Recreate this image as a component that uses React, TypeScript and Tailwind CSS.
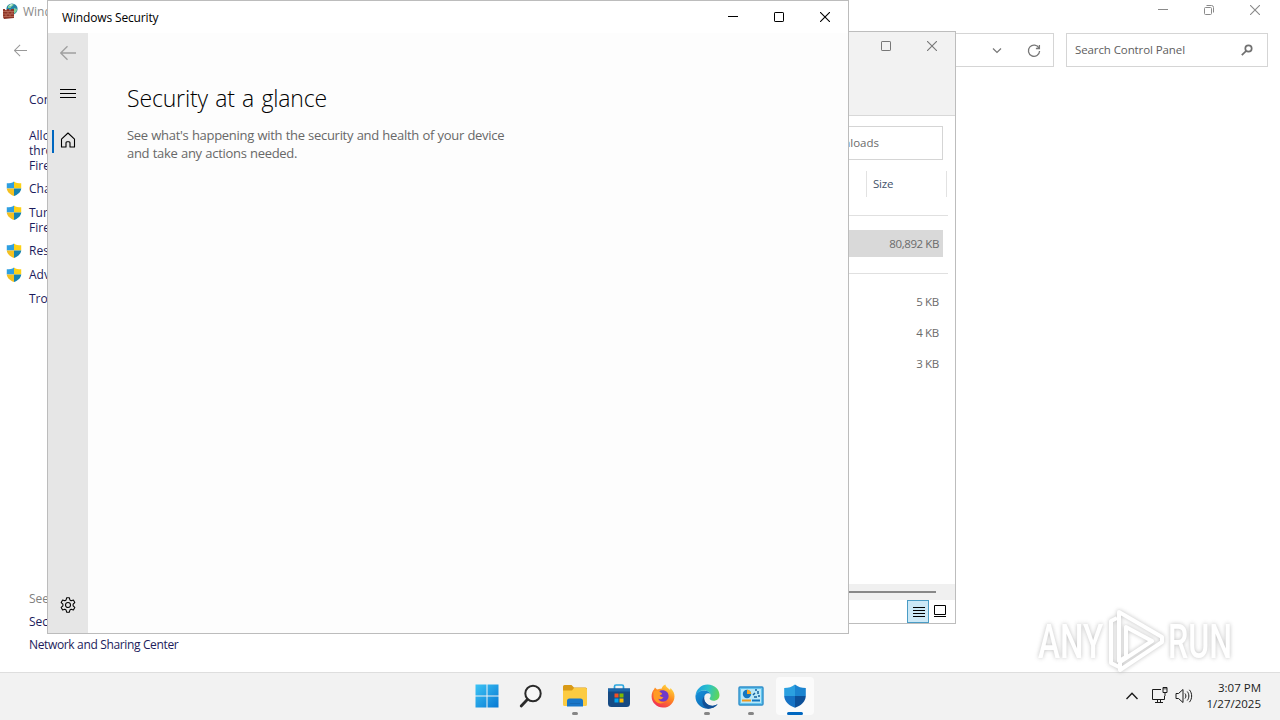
import React from "react";

const tasks = [
  { lines: ["Allo", "thro", "Fire"], shield: false, gap: "mt-[21px]" },
  { lines: ["Cha"], shield: true, gap: "mt-2" },
  { lines: ["Turn", "Fire"], shield: true, gap: "mt-[9px]" },
  { lines: ["Res"], shield: true, gap: "mt-2" },
  { lines: ["Adv"], shield: true, gap: "mt-[9px]" },
  { lines: ["Trou"], shield: false, gap: "mt-[9px]" },
];

const files = ["5 KB", "4 KB", "3 KB"];

const UacShield = () => (
  <svg width="16" height="15" viewBox="0 0 16 16" className="shrink-0">
    <path d="M8 .5C6 2 3.500 2.500.3 2.500V8H8z" fill="#2f9fe0" />
    <path d="M8 .5c2 1.500 4.500 2 7.700 2V8H8z" fill="#fcd116" />
    <path d="M.3 8c.2 3.500 3.400 6.400 7.700 8V8z" fill="#f4c020" />
    <path d="M15.700 8c-.2 3.500-3.400 6.400-7.700 8V8z" fill="#1683b0" />
  </svg>
);

const BackArrow = ({ size }: { size: number }) => (
  <svg width={size} height={size} viewBox="0 0 16 16" fill="none" stroke="currentColor" strokeWidth="1.3">
    <path d="M16 8H.8M7.500 1.200.7 8l6.800 6.800" />
  </svg>
);

const Minimize = () => (
  <svg width="10" height="10" viewBox="0 0 10 10" stroke="currentColor">
    <path d="M0 4.500h10" />
  </svg>
);

const Maximize = () => (
  <svg width="10" height="10" viewBox="0 0 10 10" fill="none" stroke="currentColor">
    <rect x=".5" y=".5" width="9" height="9" rx=".6" />
  </svg>
);

const Restore = () => (
  <svg width="10" height="10" viewBox="0 0 10 10" fill="none" stroke="currentColor">
    <rect x=".5" y="2.500" width="7" height="7" rx="1" />
    <path d="M2.500.5h5a2 2 0 0 1 2 2v5" />
  </svg>
);

const Close = () => (
  <svg width="10" height="10" viewBox="0 0 10 10" stroke="currentColor" strokeWidth="1.1">
    <path d="M0 0l10 10M10 0L0 10" />
  </svg>
);

const FirewallIcon = () => (
  <svg width="16" height="16" viewBox="0 0 16 16" className="shrink-0">
    <circle cx="10" cy="6" r="5.600" fill="#2785a8" />
    <path d="M6 3c2-2.500 5-2.500 6-1.500-1 2-3 1.500-3.500 3.500L6 5zM12 5l3 1c0 2-1 4-3 4.500z" fill="#7fd09a" />
    <path d="M7 2.500c1-1 2.500-1.400 3.500-1.200L9 3z" fill="#d7f1f5" />
    <path d="M1 6h2v1h2V6h2v1h2V6h3v9l-10 1-1-2z" fill="#8d3527" />
    <path d="M1 8.500h11M1 11h11M1 13.500h11M4 6.500v2M8 6.500v2M6 8.500V11M10 8.500V11M4 11v2.500M8 11v2.500" stroke="#c9826d" strokeWidth=".6" />
  </svg>
);

const ControlPanelWindow = () => (
  <div className="absolute inset-x-0 top-0 h-[672px] bg-white">
    <div className="flex h-[22px] items-center justify-between pl-[2px] text-[#8a8a8a]">
      <div className="flex items-center gap-[5px]">
        <FirewallIcon />
        <span className="pt-px text-[12px]">Wind</span>
      </div>
      <div className="flex gap-9 pr-5 pb-[2px]">
        <Minimize />
        <Restore />
        <Close />
      </div>
    </div>
    <div className="flex h-[56px] items-center pr-3 pl-[14px] text-[#777]">
      <div className="text-[#999]">
        <BackArrow size={13} />
      </div>
      <div className="ml-auto flex h-[34px] w-[200px] items-center justify-end gap-[25px] border border-[#d5d5d5] pr-3">
        <svg width="10" height="10" viewBox="0 0 10 10" fill="none" stroke="currentColor" strokeWidth="1.200">
          <path d="M1 3.500l4 4 4-4" />
        </svg>
        <svg width="14" height="14" viewBox="0 0 14 14" fill="none" stroke="currentColor" strokeWidth="1.300" className="mt-0.5">
          <path d="M12 4.200A5.600 5.600 0 1 0 12.600 7M12.400 1v3.500H8.900" />
        </svg>
      </div>
      <div className="ml-3 flex h-[34px] w-[202px] items-center justify-between border border-[#d5d5d5] pr-[14px] pl-2">
        <span className="text-[11.500px] tracking-[-0.1px] text-[#606060]">Search Control Panel</span>
        <svg width="12" height="12" viewBox="0 0 12 12" fill="none" stroke="#707070" strokeWidth="1.700">
          <circle cx="7.500" cy="4.500" r="3.200" />
          <path d="M5.200 6.900L.8 11.200" />
        </svg>
      </div>
    </div>
    <div className="flex h-[580px] w-[240px] flex-col pt-[14px] pl-[6px] text-[12px] leading-[15px] text-[#1c1c5c]">
      <p className="pl-[23px]">Con</p>
      {tasks.map((task) => (
        <div key={task.lines[0]} className={`flex gap-[7px] ${task.gap}`}>
          {task.shield ? <UacShield /> : <span className="w-4 shrink-0" />}
          <div>
            {task.lines.map((line) => (
              <p key={line} className="whitespace-nowrap">{line}</p>
            ))}
          </div>
        </div>
      ))}
      <div className="mt-auto flex flex-col gap-2 pb-[6px] pl-[23px]">
        <p className="text-[#808080]">See</p>
        <p>Sec</p>
        <p className="tracking-[-0.35px]">Network and Sharing Center</p>
      </div>
    </div>
  </div>
);

const ExplorerWindow = () => (
  <div className="absolute top-[31px] left-[700px] flex h-[593px] w-[256px] flex-col border border-[#bdbdbd] bg-white text-[11.500px] text-[#6b6b6b]">
    <div className="h-[84px] border-b border-[#d8d8d8] bg-[#f2f2f2]">
      <div className="flex justify-end gap-9 pt-[9px] pr-[18px] text-[#777]">
        <Maximize />
        <Close />
      </div>
    </div>
    <div className="mt-[10px] mr-3 flex h-[34px] items-center justify-end border border-[#d5d5d5] pr-[63px]">
      Downloads
    </div>
    <div className="mt-[11px] mr-2 flex h-[26px] justify-end">
      <div className="flex w-[81px] items-center border-x border-[#e2e2e2] pl-[6px] tracking-[-0.2px] text-[#43536b]">Size</div>
    </div>
    <div className="mt-[18px] mr-[7px] h-px bg-[#e0e0e0]" />
    <div className="mt-[14px] mr-3 flex h-[27px] items-center justify-end bg-[#d9d9d9] pr-1 tracking-[-0.4px]">80,892 KB</div>
    <div className="mt-4 mr-[7px] h-px bg-[#e0e0e0]" />
    <div className="mt-[12px] flex flex-col pr-4 tracking-[-0.3px]">
      {files.map((size) => (
        <div key={size} className="flex h-[31px] items-center justify-end">{size}</div>
      ))}
    </div>
    <div className="mt-auto flex h-4 items-center bg-[#f0f0f0] pr-[19px]">
      <div className="h-[2px] w-full bg-[#888]" />
    </div>
    <div className="flex h-[23px] items-center justify-end gap-[5px] pr-[9px] text-black">
      <div className="flex h-[23px] w-[22px] items-center justify-center border border-[#4a9cc5] bg-[#cce8f6] pl-px">
        <svg width="12" height="11" viewBox="0 0 12 11" stroke="currentColor">
          <path d="M0 1.500h12M0 4.500h12M0 7.500h12M0 10.500h12" />
        </svg>
      </div>
      <svg width="12" height="12" viewBox="0 0 12 12" fill="none" stroke="currentColor" className="mb-px">
        <path d="M.5.500h11v9H.5zM0 11.500h12" />
      </svg>
    </div>
  </div>
);

const SecurityWindow = () => (
  <div className="absolute top-0 left-[47px] flex h-[634px] w-[802px] flex-col border border-[#bcbcbc] bg-white text-black">
    <div className="flex h-8 shrink-0 items-center justify-between pr-[18px] pl-[14px]">
      <span className="pt-[2px] text-[12px] tracking-[-0.15px]">Windows Security</span>
      <div className="flex gap-9">
        <Minimize />
        <Maximize />
        <Close />
      </div>
    </div>
    <div className="flex flex-1">
      <div className="flex w-10 flex-col items-center bg-[#e6e6e6] pt-[12px] pb-[20px]">
        <div className="text-[#a0a0a0]">
          <BackArrow size={16} />
        </div>
        <svg width="16" height="10" viewBox="0 0 16 10" stroke="currentColor" className="mt-[28px]">
          <path d="M0 .5h16M0 4.500h16M0 8.500h16" />
        </svg>
        <div className="mt-[30px] flex h-6 w-full items-center pl-1">
          <div className="h-[23px] w-[2px] bg-[#0067c0]" />
          <svg width="16" height="16" viewBox="0 0 16 16" fill="none" stroke="currentColor" strokeWidth="1.100" className="mb-[2px] ml-[6px]">
            <path d="M1.500 7.200L8 1l6.500 6.200V15H10v-4.200a1 1 0 0 0-1-1H7a1 1 0 0 0-1 1V15H1.500z" strokeLinejoin="round" />
          </svg>
        </div>
        <svg width="16" height="16" viewBox="0 0 16 16" fill="none" stroke="currentColor" strokeWidth="1.050" strokeLinejoin="round" className="mt-auto">
          <circle cx="8" cy="8" r="2.500" />
          <path d="M6.600.8h2.800l.5 2.200 1.300.8 2.200-.7 1.400 2.500L13.100 7.200v1.600l1.700 1.600-1.400 2.500-2.200-.7-1.300.8-.5 2.200H6.600L6.100 13l-1.300-.8-2.200.7-1.400-2.500 1.700-1.600V7.200L1.200 5.600l1.400-2.500 2.200.7L6.100 3z" />
        </svg>
      </div>
      <div className="flex-1 bg-[#fdfdfd] pt-[49px] pl-[39px]">
        <h1 className="text-[23px] leading-8 font-light tracking-[-0.15px] [word-spacing:1.5px]">Security at a glance</h1>
        <p className="mt-3 text-[13px] leading-[18px] tracking-[-0.3px] whitespace-nowrap text-[#686868] [word-spacing:0.4px]">
          See what's happening with the security and health of your device
          <br />
          and take any actions needed.
        </p>
      </div>
    </div>
  </div>
);

const StartIcon = () => (
  <svg width="24" height="24" viewBox="0 0 24 24">
    <defs>
      <linearGradient id="start" x1="0" y1="0" x2="1" y2="1" gradientUnits="objectBoundingBox">
        <stop stopColor="#3cc4f5" />
        <stop offset="1" stopColor="#0878d3" />
      </linearGradient>
    </defs>
    <path d="M.5.500h11v11H.5zM12.500.500h11v11h-11zM.5 12.500h11v11H.5zM12.500 12.500h11v11h-11z" fill="url(#start)" />
  </svg>
);

const SearchIcon = () => (
  <svg width="24" height="24" viewBox="0 0 24 24" fill="none" stroke="#2a2a2a">
    <circle cx="14" cy="9.500" r="7.700" strokeWidth="2" fill="#f7f7f7" />
    <path d="M8.400 15.500L2.200 22" strokeWidth="2.800" strokeLinecap="round" />
  </svg>
);

const FolderIcon = () => (
  <svg width="26" height="24" viewBox="0 0 26 24">
    <path d="M1 2.500A1.500 1.500 0 0 1 2.500 1h7L12 3.500h11.500A1.500 1.500 0 0 1 25 5v5H1z" fill="#d99a16" />
    <path d="M1 6.500h9l2-2.500h11.500A1.500 1.500 0 0 1 25 5.500v15a1.500 1.500 0 0 1-1.500 1.500h-21A1.500 1.500 0 0 1 1 20.500z" fill="#fccb42" />
    <path d="M5 22.500V17A2.500 2.500 0 0 1 7.500 14.500h11a2.500 2.500 0 0 1 2.500 2.500v5.500z" fill="#1976c8" />
    <path d="M8 19.500h10" stroke="#1769b4" />
  </svg>
);

const StoreIcon = () => (
  <svg width="24" height="24" viewBox="0 0 24 24">
    <path d="M7.500 5V2.500A1.500 1.500 0 0 1 9 1h6a1.500 1.500 0 0 1 1.500 1.500V5" fill="none" stroke="#2aa7e0" strokeWidth="1.700" />
    <path d="M1 4.500h22v15a3.500 3.500 0 0 1-3.500 3.500h-15A3.500 3.500 0 0 1 1 19.500z" fill="#164a83" />
    <path d="M1 4.500h22v3H1z" fill="#1b66a9" />
    <path d="M7.500 9.500h4v4h-4z" fill="#f25022" />
    <path d="M12.500 9.500h4v4h-4z" fill="#7fba00" />
    <path d="M7.500 14.500h4v4h-4z" fill="#00a4ef" />
    <path d="M12.500 14.500h4v4h-4z" fill="#ffb900" />
  </svg>
);

const FirefoxIcon = () => (
  <svg width="24" height="24" viewBox="0 0 24 24">
    <defs>
      <linearGradient id="fox" x1=".8" y1="0" x2=".2" y2="1">
        <stop stopColor="#ffe044" />
        <stop offset=".45" stopColor="#ff8a20" />
        <stop offset="1" stopColor="#f0245c" />
      </linearGradient>
    </defs>
    <path d="M3 5.500l1-2 2 2c2-.5 3-1 4.500-.8C11.500 2 13 .8 14.500.5c0 2.500 3 3.500 4.500 5.500l.5-2c3 3 4 5.500 4 8.500A11.400 11.400 0 0 1 12 23.600 11.400 11.400 0 0 1 .6 12.500C.6 9.500 1.500 7 3 5.500z" fill="url(#fox)" />
    <path d="M8 7.500c2-2 6-1.500 8 .5 2.500 2.500 2 7-1 8.800-3 1.700-7 .5-8-2.800 2 1 4 .5 5-1-1.500 0-3-.5-3.500-2 1 0 2-.5 2.500-1.500C10 9.500 9 8.500 8 7.500z" fill="#7139c8" />
    <path d="M2.500 7.500c2-1.500 5-1.500 6.500.5l2 1.500c-.5 1.500-2 1.500-2.500 2 .5 1.500 2 2 4 1.500-1.500 3-4.500 2.500-5.500 1.500 1 3 4 4.500 7 3.500-5 3.500-11 0-11.500-5z" fill="#ff9a25" />
  </svg>
);

const EdgeIcon = () => (
  <svg width="25" height="25" viewBox="0 0 24 24">
    <defs>
      <linearGradient id="edgeTop" x1="0" y1=".3" x2="1" y2=".5">
        <stop stopColor="#1b9de2" />
        <stop offset=".5" stopColor="#2bc3c9" />
        <stop offset="1" stopColor="#60d657" />
      </linearGradient>
      <linearGradient id="edgeSide" x1="0" y1="0" x2="1" y2="1">
        <stop stopColor="#1693dc" />
        <stop offset="1" stopColor="#0c59a4" />
      </linearGradient>
    </defs>
    <path d="M.5 11C1.200 5 6 .5 12 .5c7 0 11.500 5 11.500 10 0 3.500-2.500 5.500-5.500 5.500-2.500 0-4-1-4-2 0-.7 1-1.200 1-3 0-2.500-2.500-4.700-6-4.700-4 0-7 2-8.500 4.700z" fill="url(#edgeTop)" />
    <path d="M.5 11C2 8 5 6.300 9 6.300c3 0 5 1.500 5.700 3C12 7.800 8.700 9.500 8.700 13.500c0 4.500 4 7.500 8 7.500 2 0 3.700-.8 5-1.500-2 2.700-5.500 4.200-9.200 4.200C5 23.700-.2 17.500.5 11z" fill="url(#edgeSide)" />
    <path d="M8.900 12c-.8 4.500 2.500 8.800 8 8.800 2.300 0 4-.8 5-1.500-2 3-5.500 4.400-9 4.400C7 22.500 5.500 15.500 8.900 12z" fill="#124f95" />
  </svg>
);

const PanelIcon = () => (
  <svg width="26" height="20" viewBox="0 0 26 20">
    <rect x="1" y="1" width="24" height="18" rx="1" fill="#64c5ee" stroke="#2f8fca" strokeWidth="1.400" />
    <rect x="3" y="3" width="20" height="14" fill="#b9e7f8" />
    <circle cx="9" cy="8" r="4.200" fill="#1477c0" />
    <path d="M9 8V3.800A4.200 4.200 0 0 1 13.200 8z" fill="#f6a623" />
    <path d="M15 9l2-2M17 4h2M20 5v3M16 11h3M20 10h2" stroke="#14619c" strokeWidth="1.500" />
    <path d="M4 14.500h9" stroke="#ef9a20" strokeWidth="2" />
    <path d="M14 14.500h8" stroke="#1477c0" strokeWidth="2" />
  </svg>
);

const DefenderIcon = () => (
  <svg width="24" height="24" viewBox="0 0 24 24">
    <path d="M12 .5C9 3 5.500 4 1.200 4v8H12z" fill="#2ba0e0" />
    <path d="M12 .5c3 2.500 6.500 3.500 10.800 3.500v8H12z" fill="#1b84d0" />
    <path d="M1.200 12c.3 5.500 4.300 9.500 10.800 11.800V12z" fill="#1672c4" />
    <path d="M22.800 12c-.3 5.500-4.300 9.500-10.800 11.800V12z" fill="#0d5099" />
  </svg>
);

const apps = [
  { name: "start", icon: <StartIcon />, state: "idle" },
  { name: "search", icon: <SearchIcon />, state: "idle" },
  { name: "explorer", icon: <FolderIcon />, state: "running" },
  { name: "store", icon: <StoreIcon />, state: "idle" },
  { name: "firefox", icon: <FirefoxIcon />, state: "idle" },
  { name: "edge", icon: <EdgeIcon />, state: "running" },
  { name: "panel", icon: <PanelIcon />, state: "running" },
  { name: "defender", icon: <DefenderIcon />, state: "active" },
];

const Taskbar = () => (
  <div className="absolute inset-x-0 bottom-0 flex h-12 border-t border-[#dedede] bg-[#f2f2f2]">
    <div className="ml-[468px] flex gap-[6px] pt-[4px]">
      {apps.map((app) => (
        <div
          key={app.name}
          className={`relative flex h-[38px] w-[38px] items-center justify-center rounded ${app.state === "active" ? "bg-[#fbfbfb]" : ""}`}
        >
          {app.icon}
          {app.state === "running" && <span className="absolute bottom-0 h-[3px] w-[6px] rounded-full bg-[#858585]" />}
          {app.state === "active" && <span className="absolute bottom-0 h-[3px] w-4 rounded-full bg-[#0067c0]" />}
        </div>
      ))}
    </div>
    <div className="ml-auto flex items-center pr-[19px] pb-[2px] text-[#1b1b1b]">
      <svg width="12" height="8" viewBox="0 0 12 8" fill="none" stroke="currentColor" strokeWidth="1.400">
        <path d="M.5 7L6 1.300 11.500 7" />
      </svg>
      <svg width="17" height="17" viewBox="0 0 17 17" fill="none" stroke="currentColor" className="ml-[13px]">
        <path d="M10 2.500H1.500v10h12V9M4 15.500h8M6.500 12.500v3M9.500 12.500v3M12 .500h4v5h-4zM14 5.500V9M13 .500v2M15 .500v2" />
      </svg>
      <svg width="18" height="16" viewBox="0 0 18 16" fill="none" stroke="currentColor" className="ml-[7px]">
        <path d="M1 5.500h2.500L8 1.500v13l-4.500-4H1z" strokeLinejoin="round" />
        <path d="M10 5.500c1.200 1.500 1.200 3.500 0 5M12.200 3.500c2.200 2.500 2.200 6.500 0 9M14.400 1.800c3 3.500 3 8.900 0 12.400" />
      </svg>
      <div className="ml-3 w-[56px] text-right text-[11.500px] leading-4 whitespace-nowrap">
        <p>3:07 PM</p>
        <p>1/27/2025</p>
      </div>
    </div>
  </div>
);

const Watermark = () => (
  <div className="absolute top-[608px] left-[1038px] flex h-[66px] items-center gap-[3px] text-white opacity-75 drop-shadow-[0_0_2px_#aaa]">
    <span className="w-[66px] pt-[2px] font-['Roboto'] text-[48px] leading-none font-medium whitespace-nowrap">
      <span className="inline-block origin-left scale-x-[0.69]">ANY</span>
    </span>
    <svg width="58" height="64" viewBox="0 0 58 64" fill="none" stroke="currentColor" strokeWidth="4" strokeLinejoin="round">
      <path d="M12 3l43 25v5L13 61v-8l32-21-26-14v30l-7 4z" />
      <path d="M10 9l-6 3v42l8 4M19 18v28" />
    </svg>
    <span className="w-[66px] pt-[2px] font-['Roboto'] text-[48px] leading-none font-medium whitespace-nowrap">
      <span className="inline-block origin-left scale-x-[0.67]">RUN</span>
    </span>
  </div>
);

const App = () => {
  return (
    <div className="relative h-[720px] w-[1280px] overflow-hidden bg-white font-['Open_Sans','Noto_Sans',sans-serif]">
      <ControlPanelWindow />
      <ExplorerWindow />
      <SecurityWindow />
      <Taskbar />
      <Watermark />
    </div>
  );
};

export default App;
